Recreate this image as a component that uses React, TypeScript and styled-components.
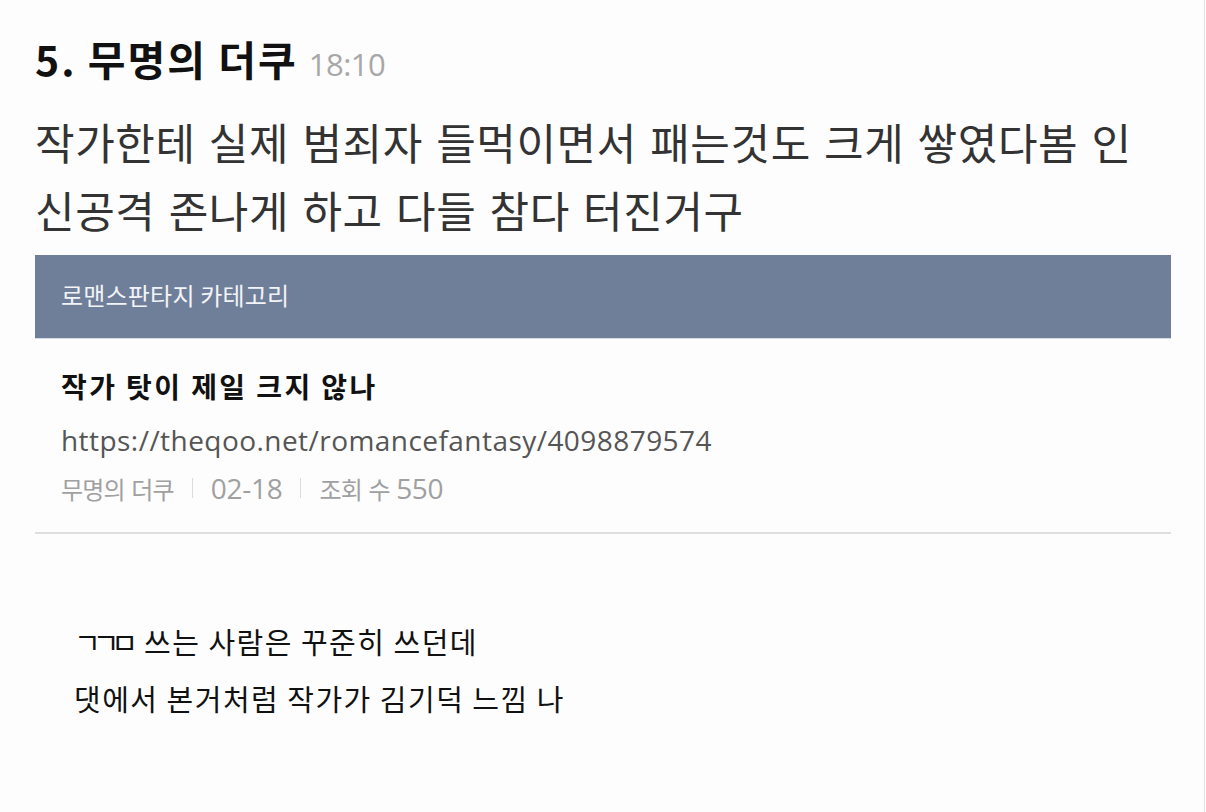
import React from 'react'
import styled, { createGlobalStyle } from 'styled-components'

const GlobalStyle = createGlobalStyle`
  html, body {
    margin: 0;
    padding: 0;
    background: #fdfdfd;
  }
  body {
    font-family: "Noto Sans CJK KR", "Noto Sans", sans-serif;
  }
`

const Page = styled.div`
  width: 1205px;
  min-height: 812px;
  box-sizing: border-box;
  border-right: 1px solid #e2e2e2;
  padding: 33px 35px 0 35px;
`

const Heading = styled.div`
  display: flex;
  align-items: baseline;
  gap: 11px;
  height: 50px;
  line-height: 50px;
`

const Name = styled.span`
  font-size: 41px;
  font-weight: 700;
  letter-spacing: 2px;
  color: #111;
`

const Time = styled.span`
  font-family: "Open Sans", "Noto Sans CJK KR", sans-serif;
  font-size: 31px;
  color: #a8a8a8;
  letter-spacing: -0.5px;
`

const Body = styled.p`
  margin: 24px 0 0 0;
  font-size: 43px;
  line-height: 68px;
  letter-spacing: 0.6px;
  word-spacing: 3px;
  color: #333;
`

const Card = styled.div`
  margin-top: 12px;
  width: 1136px;
`

const Band = styled.div`
  height: 84px;
  box-sizing: border-box;
  background: #6f7f99;
  display: flex;
  align-items: center;
  padding: 0 26px 4px 26px;
  border-bottom: 1px solid #d6dbe3;
`

const Category = styled.span`
  font-size: 24px;
  letter-spacing: 0.2px;
  color: #f2f4f7;
`

const Info = styled.div`
  padding: 29px 26px 26px 26px;
  border-bottom: 2px solid #dedede;
  display: flex;
  flex-direction: column;
`

const Title = styled.div`
  font-size: 28px;
  font-weight: 700;
  line-height: 36px;
  letter-spacing: 2.4px;
  color: #111;
`

const Url = styled.div`
  margin-top: 16px;
  font-family: "Open Sans", "Noto Sans CJK KR", sans-serif;
  font-size: 28px;
  line-height: 40px;
  letter-spacing: 0.45px;
  color: #555;
`

const Meta = styled.div`
  margin-top: 10px;
  display: flex;
  align-items: center;
  height: 36px;
  font-family: "Open Sans", "Noto Sans CJK KR", sans-serif;
  font-size: 24px;
  color: #a0a0a0;
`

const MetaItem = styled.span`
  letter-spacing: -0.8px;
  word-spacing: 1px;
`

const Num = styled.span`
  font-size: 28px;
  letter-spacing: -0.3px;
`

const Divider = styled.span`
  width: 1px;
  height: 20px;
  background: #dcdcdc;
  margin: 0 18px;
`

const Comment = styled.div`
  padding: 79px 0 0 39px;
  font-size: 29px;
  line-height: 57px;
  letter-spacing: 1.5px;
  color: #111;
`

const Jamo = styled.span`
  letter-spacing: -8px;
  margin-right: 6px;
`

export default function App() {
  return (
    <>
      <GlobalStyle />
      <Page>
        <Heading>
          <Name>5. 무명의 더쿠</Name>
          <Time>18:10</Time>
        </Heading>
        <Body>
          작가한테 실제 범죄자 들먹이면서 패는것도 크게 쌓였다봄 인
          <br />
          신공격 존나게 하고 다들 참다 터진거구
        </Body>
        <Card>
          <Band>
            <Category>로맨스판타지 카테고리</Category>
          </Band>
          <Info>
            <Title>작가 탓이 제일 크지 않나</Title>
            <Url>https://theqoo.net/romancefantasy/4098879574</Url>
            <Meta>
              <MetaItem>무명의 더쿠</MetaItem>
              <Divider />
              <MetaItem>
                <Num>02-18</Num>
              </MetaItem>
              <Divider />
              <MetaItem>
                조회 수 <Num>550</Num>
              </MetaItem>
            </Meta>
          </Info>
        </Card>
        <Comment>
          <Jamo>ㄱㄱㅁ</Jamo> 쓰는 사람은 꾸준히 쓰던데
          <br />
          댓에서 본거처럼 작가가 김기덕 느낌 나
        </Comment>
      </Page>
    </>
  )
}
